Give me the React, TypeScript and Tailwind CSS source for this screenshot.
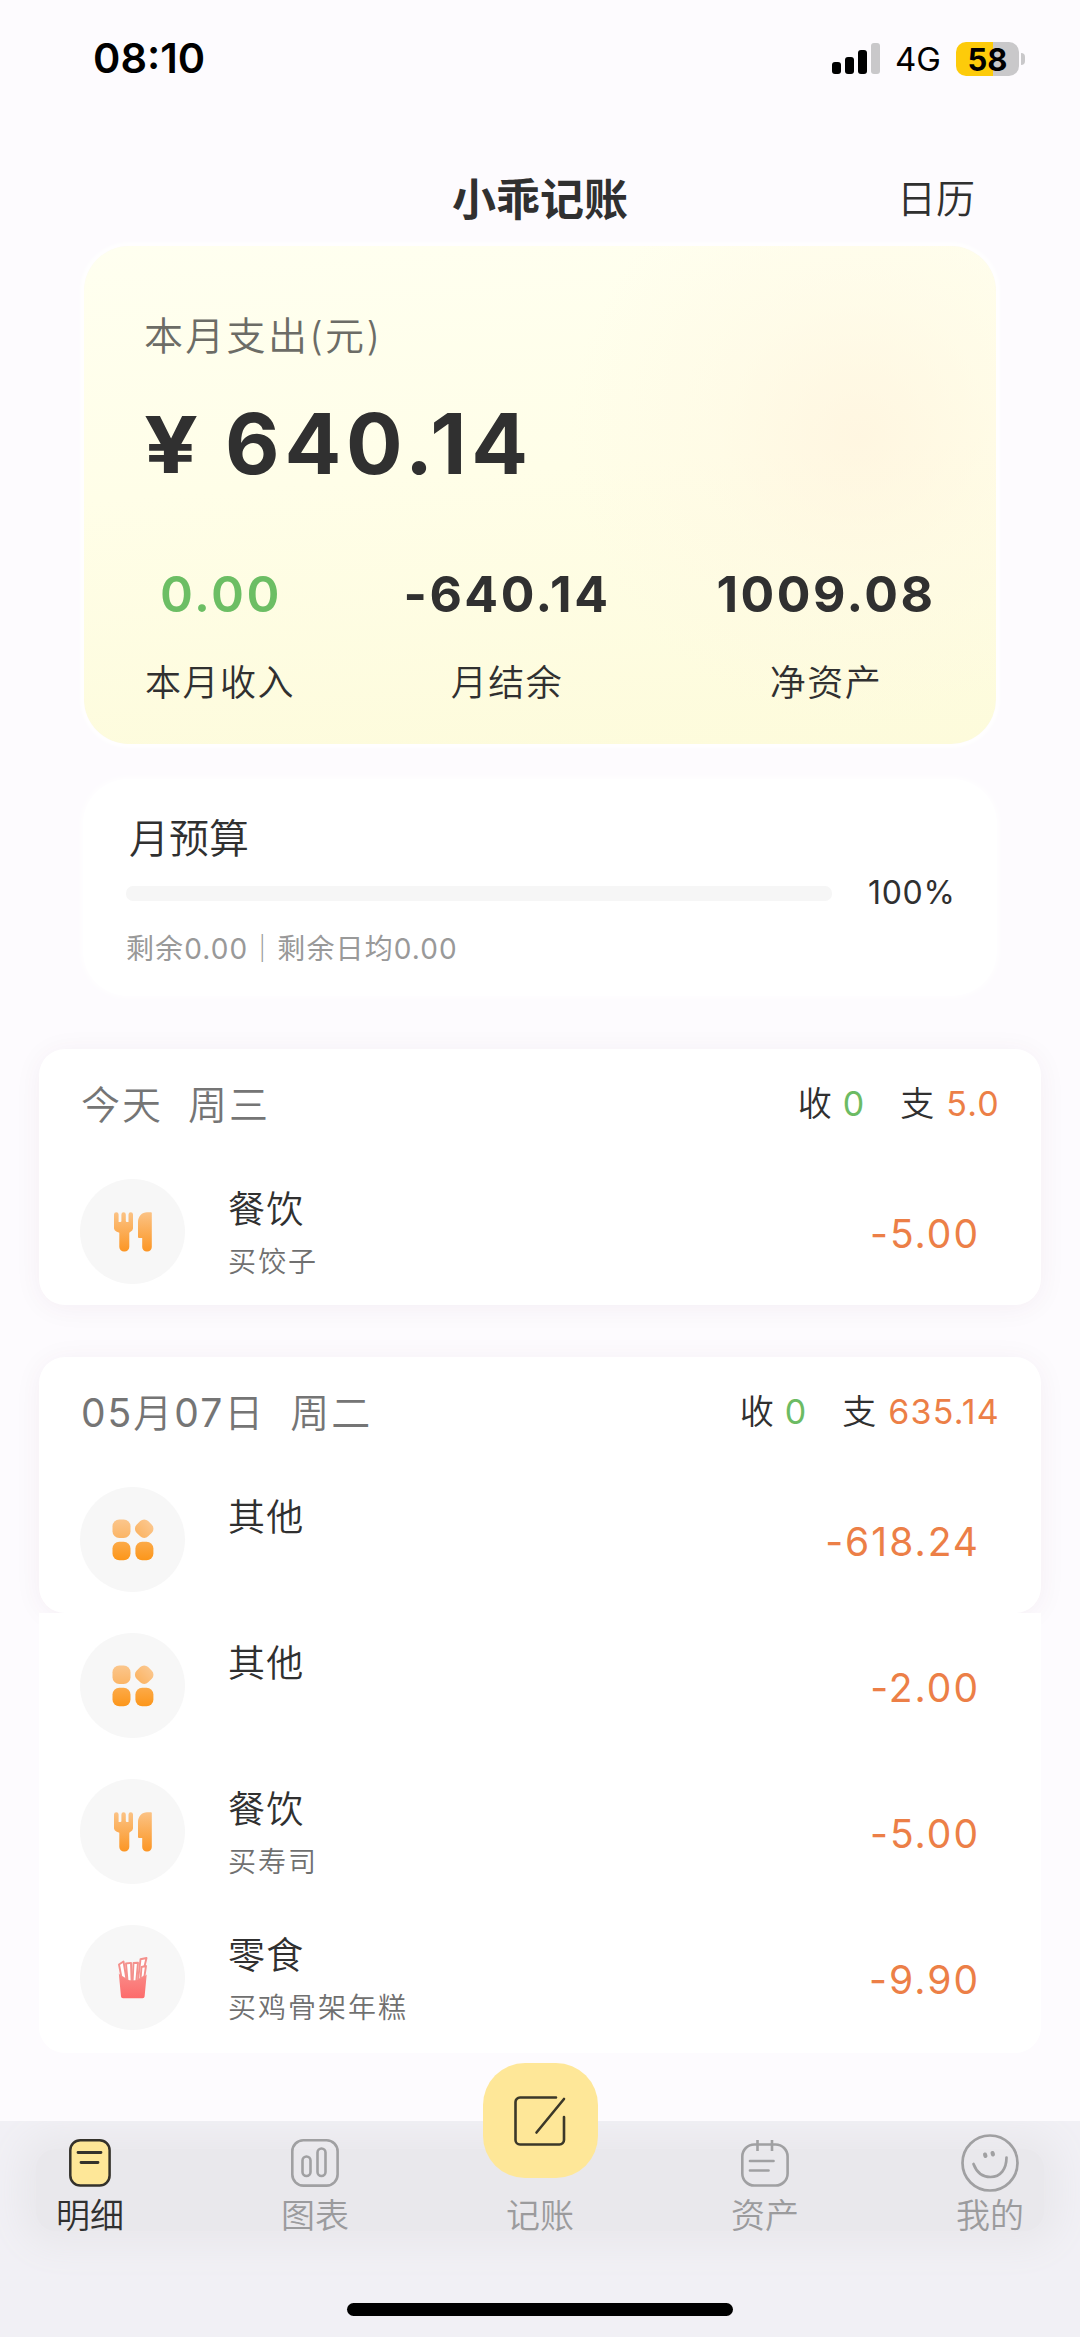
import React from "react";

type Kind = "food" | "other" | "snack";
interface Entry {
  kind: Kind;
  name: string;
  note?: string;
  amount: string;
}

function FoodIcon() {
  return (
    <svg width="40" height="42" viewBox="0 0 40 42" fill="url(#food)">
      <defs>
        <linearGradient id="food" x1="0" y1="0" x2="0" y2="42" gradientUnits="userSpaceOnUse">
          <stop offset="0" stopColor="#fbc488" />
          <stop offset="1" stopColor="#fc9420" />
        </linearGradient>
      </defs>
      <path d="M1 3.500a2.300 2.300 0 0 1 4.600 0V11h1.800a1 1 0 0 0 1-1V3.500a2.200 2.200 0 0 1 4.400 0V10a1 1 0 0 0 1 1h1.700V3.500a2.200 2.200 0 0 1 4.500 0V17.500a4 4 0 0 1-2.500 3.200L16.300 21.700V36a4.700 4.700 0 0 1-4.700 4.500h-.6A4.700 4.700 0 0 1 6.300 36V21.700L3.300 20.600A4 4 0 0 1 1 17.500Z" />
      <path d="M38.800 2a.8.8 0 0 0-.8-.8h-4c-5 0-9 4-9 10V26a1 1 0 0 0 1 1h3.200v9a4.500 4.500 0 0 0 4.500 4.500h.6A4.500 4.500 0 0 0 38.800 36Z" />
    </svg>
  );
}

function OtherIcon() {
  return (
    <svg width="42" height="42" viewBox="0 0 42 42">
      <defs>
        <linearGradient id="otherTop" x1="0" y1="0" x2="0" y2="1">
          <stop offset="0" stopColor="#fbc68c" />
          <stop offset="1" stopColor="#fbb566" />
        </linearGradient>
        <linearGradient id="otherBottom" x1="0" y1="0" x2="0" y2="1">
          <stop offset="0" stopColor="#fcaa48" />
          <stop offset="1" stopColor="#fc961a" />
        </linearGradient>
      </defs>
      <rect x="0.500" y="0.500" width="18" height="18.500" rx="6.800" fill="url(#otherTop)" />
      <rect x="24" y="1.500" width="16.400" height="16.400" rx="5.600" transform="rotate(45 32.200 9.700)" fill="url(#otherTop)" />
      <rect x="0.500" y="22.800" width="18" height="18.500" rx="6.800" fill="url(#otherBottom)" />
      <rect x="23.400" y="22.800" width="18" height="18.500" rx="6.800" fill="url(#otherBottom)" />
    </svg>
  );
}

function SnackIcon() {
  return (
    <svg width="30" height="42" viewBox="0 0 30 42">
      <defs>
        <linearGradient id="snack" x1="0" y1="0" x2="0" y2="42" gradientUnits="userSpaceOnUse">
          <stop offset="0" stopColor="#f7a09b" />
          <stop offset="1" stopColor="#fd6a6a" />
        </linearGradient>
      </defs>
      <g fill="#fff" stroke="#f4908c" strokeWidth="1.900" strokeLinejoin="round">
        <path d="m22.500 2.300 6-1.300-4.800 20-3.700 2.500Z" />
        <path d="m23.500 10 4.500-1-1.500 10-4 3.500Z" />
        <path d="M1 7.500 5.500 4.500l3 18-5.200-3Z" />
        <path d="m8 6.500 5-.6.600 19-4-.6Z" />
        <path d="m15.500 6 4.500-.3-1.700 18.500-3.700.5Z" />
      </g>
      <path d="M.8 16.500Q7 23.500 15 23.800 23 23.500 28.700 17.500l-2.100 22a2 2 0 0 1-2 1.800H5a2 2 0 0 1-2-1.800Z" fill="url(#snack)" />
    </svg>
  );
}

const icons: Record<Kind, React.ReactElement> = {
  food: <FoodIcon />,
  other: <OtherIcon />,
  snack: <SnackIcon />,
};

function Row({ entry }: { entry: Entry }) {
  return (
    <div className="flex h-[146px] pl-[41px] pr-[61px] pt-[20px]">
      <div className="flex size-[105px] shrink-0 items-center justify-center rounded-full bg-[#f7f7f7]">
        {icons[entry.kind]}
      </div>
      <div className="ml-[43px] flex-1 pt-[11px]">
        <div className="text-[37px] leading-[40px] tracking-[1.200px] text-[#303030]">{entry.name}</div>
        {entry.note && (
          <div className="mt-[12px] text-[28px] leading-[40px] tracking-[2px] text-[#707070]">{entry.note}</div>
        )}
      </div>
      <div className="h-[106px] text-[39px] font-normal leading-[110px] tracking-[2px] text-[#ec7f47]">{entry.amount}</div>
    </div>
  );
}

function DayHeader({ date, week, expense }: { date: React.ReactNode; week: string; expense: string }) {
  return (
    <div className="flex h-[110px] items-start justify-between pl-[42px] pr-[41px] pt-[26px]">
      <div className="flex gap-[25px] text-[39px] leading-[60px] tracking-[2px] text-[#757575]">
        <span>{date}</span>
        <span>{week}</span>
      </div>
      <div className="flex text-[34px] leading-[58px] text-[#303030]">
        <span>收</span>
        <span className="ml-[11px] font-normal text-[#6cbb63]">0</span>
        <span className="ml-[36px]">支</span>
        <span className="ml-[12px] font-normal tracking-[1.200px] text-[#ec7f47]">{expense}</span>
      </div>
    </div>
  );
}

function Stat({ value, label, className }: { value: string; label: string; className: string }) {
  return (
    <div className={className}>
      <div className="text-[50px] font-bold leading-[60px] tracking-[2.500px]">{value}</div>
      <div className="mt-[34px] text-[36px] leading-[50px] tracking-[1.500px] text-[#303030]">{label}</div>
    </div>
  );
}

function Tab({ label, active, children }: { label: string; active?: boolean; children: React.ReactNode }) {
  return (
    <div className="flex w-[180px] flex-col items-center">
      <div className="flex h-[84px] items-center justify-center">{children}</div>
      <div className={active ? "mt-px text-[34px] leading-[20px] text-[#303030]" : "mt-px text-[34px] leading-[20px] text-[#9b9b9d]"}>
        {label}
      </div>
    </div>
  );
}

export default function App() {
  return (
    <div
      lang="zh-CN"
      className="flex h-[2337px] w-[1080px] flex-col overflow-hidden bg-[#fdfbfe] font-['Inter','Noto_Sans_CJK_SC',sans-serif] font-[350] whitespace-nowrap"
    >
      <header className="flex h-[118px] items-center justify-between pl-[93px] pr-[55px]">
        <div className="text-[41.500px] font-semibold leading-none text-black">08:10</div>
        <div className="flex items-center">
          <svg width="48" height="32" viewBox="0 0 48 32">
            <rect x="0" y="19" width="9" height="12" rx="3" />
            <rect x="13" y="14" width="9" height="17" rx="3" />
            <rect x="26" y="7" width="9" height="24" rx="3" />
            <rect x="39" y="0" width="9" height="31" rx="3" fill="#c9c8ca" />
          </svg>
          <span className="ml-[15px] text-[33px] font-[420] leading-none text-black">4G</span>
          <div className="ml-[15px] flex h-[34px] w-[63px] items-center justify-center rounded-[10px] bg-[linear-gradient(90deg,#fdcb0a_58%,#c9c8ca_58%)] text-[31px] font-bold leading-none text-black">
            58
          </div>
          <div className="ml-[2px] h-[12px] w-[4px] rounded-r-full bg-[#c9c8ca]" />
        </div>
      </header>

      <div className="grid h-[128px] grid-cols-3 items-center pt-[32px] leading-none">
        <span />
        <h1 className="pt-[3px] text-center text-[44px] font-bold text-[#303030]">小乖记账</h1>
        <span className="pr-[105px] text-right text-[39px] text-[#303030]">日历</span>
      </div>

      <section className="mx-[84px] h-[498px] rounded-[45px] bg-[radial-gradient(circle_at_775px_190px,rgba(255,242,221,0.650)_0,rgba(255,246,226,0.350)_140px,rgba(255,246,226,0)_290px),linear-gradient(176deg,#fffff0_0%,#fffee8_45%,#fdfbdb_100%)] pt-[60px] text-[#303030] shadow-[0_0_3px_4px_rgba(255,255,255,0.800)]">
        <div className="pl-[60px] text-[39px] leading-[60px] tracking-[2.300px] text-[#6c6c66]">本月支出(元)</div>
        <div className="flex pl-[60px] pt-[28px] font-bold leading-[100px]">
          <span className="inline-block origin-left scale-x-[1.200] text-[79px]">¥</span>
          <span className="ml-[36px] text-[84px] tracking-[4.800px]">640.14</span>
        </div>
        <div className="flex pt-[70px] text-center">
          <Stat
            className="ml-[36px] w-[200px] [&>div:first-child]:font-semibold [&>div:first-child]:text-[#6cbe64] [&>div:first-child]:pl-[2px]"
            value="0.00"
            label="本月收入"
          />
          <Stat className="ml-[74px] w-[226px]" value="-640.14" label="月结余" />
          <Stat className="ml-[86px] w-[240px]" value="1009.08" label="净资产" />
        </div>
      </section>

      <section className="mx-[83px] mt-[35px] h-[217px] rounded-[45px] bg-white px-[43px] pt-[29px] shadow-[0_0_6px_2px_rgba(255,255,255,0.800)]">
        <div className="pl-[3px] text-[40px] leading-[62px] text-[#303030]">月预算</div>
        <div className="mt-[8px] flex h-[30px] items-center">
          <div className="h-[15px] w-[706px] shrink-0 rounded-[7px] bg-[#f6f6f6]" />
          <span className="ml-[36px] text-[32px] font-normal leading-[30px] tracking-[0.700px] text-[#303030]">100%</span>
        </div>
        <div className="mt-[21px] text-[28px] font-[380] leading-[40px] tracking-[1.100px] text-[#999999]">
          剩余0.00｜剩余日均0.00
        </div>
      </section>

      <section className="mx-[39px] mt-[53px] h-[256px] rounded-[26px] bg-white shadow-[0_3px_28px_rgba(90,20,70,0.055)]">
        <DayHeader date="今天" week="周三" expense="5.0" />
        <Row entry={{ kind: "food", name: "餐饮", note: "买饺子", amount: "-5.00" }} />
      </section>

      <section className="mx-[39px] mt-[52px]">
        <div className="h-[256px] rounded-[26px] bg-white shadow-[0_3px_28px_rgba(90,20,70,0.055)]">
          <DayHeader
            date={
              <>
                <span className="font-normal">05</span>月<span className="font-normal">07</span>日
              </>
            }
            week="周二"
            expense="635.14"
          />
          <Row entry={{ kind: "other", name: "其他", amount: "-618.24" }} />
        </div>
        <div className="relative h-[440px] rounded-b-[26px] bg-white">
          <Row entry={{ kind: "other", name: "其他", amount: "-2.00" }} />
          <Row entry={{ kind: "food", name: "餐饮", note: "买寿司", amount: "-5.00" }} />
          <Row entry={{ kind: "snack", name: "零食", note: "买鸡骨架年糕", amount: "-9.90" }} />
        </div>
      </section>

      <nav className="relative mt-[68px] h-[216px] bg-[#f1f0f5]">
        <div className="absolute inset-0 overflow-hidden">
          <div className="mx-[36px] mt-[28px] h-[82px] rounded-[20px] bg-[#e9e8ec] shadow-[0_0_34px_16px_#e9e8ec]" />
        </div>
        <div className="relative flex justify-between">
          <Tab label="明细" active>
            <svg width="42" height="48" viewBox="0 0 42 48" fill="none" stroke="#34322b" strokeWidth="2.500" strokeLinecap="round">
              <rect x="1.300" y="1.300" width="39.300" height="45.300" rx="10" fill="#fee798" />
              <path d="M9 13.500h23M12 23.500h17" strokeWidth="2.800" />
            </svg>
          </Tab>
          <Tab label="图表">
            <svg width="48" height="48" viewBox="0 0 48 48" fill="none" stroke="#a0a0a2" strokeWidth="2.600">
              <rect x="1.300" y="1.300" width="45.300" height="45.300" rx="11" />
              <rect x="11.500" y="17.500" width="8" height="19.500" rx="4" />
              <rect x="26.500" y="9.500" width="8" height="27.500" rx="4" />
            </svg>
          </Tab>
          <Tab label="记账">
            <div className="-mt-[85px] flex size-[115px] items-center justify-center rounded-[42px] bg-[#fee798]">
              <svg width="52" height="50" viewBox="0 0 52 50" fill="none" stroke="#3b3829" strokeWidth="2.600" strokeLinecap="round" strokeLinejoin="round">
                <path d="M42 1.500H6a4.500 4.500 0 0 0-4.500 4.500v38a4.500 4.500 0 0 0 4.500 4.500h39.500a4.500 4.500 0 0 0 4.500-4.500V21M50 3 22.500 36.500" />
              </svg>
            </div>
          </Tab>
          <Tab label="资产">
            <svg width="48" height="48" viewBox="0 0 48 48" fill="none" stroke="#a0a0a2" strokeWidth="2.600">
              <rect x="1.300" y="5.500" width="45.300" height="41" rx="12" />
              <path d="M16.500 1v11M31 1v11" />
              <path d="M9 22h23.500M9 31.500h18.500" strokeLinecap="round" strokeWidth="2.700" />
            </svg>
          </Tab>
          <Tab label="我的">
            <svg width="58" height="58" viewBox="0 0 58 58" fill="none" stroke="#a0a0a2" strokeWidth="2.700" strokeLinecap="round">
              <circle cx="29" cy="29" r="27.500" />
              <path d="M12.500 30c3 8 9 13 17 13 10 0 16-8 16-19.500" />
              <path d="m24 20.500.5 1.500M31.500 19l.5 1.500" strokeWidth="4" />
            </svg>
          </Tab>
        </div>
        <div className="absolute inset-x-0 top-[182px] mx-auto h-[13px] w-[386px] rounded-full bg-black" />
      </nav>
    </div>
  );
}
